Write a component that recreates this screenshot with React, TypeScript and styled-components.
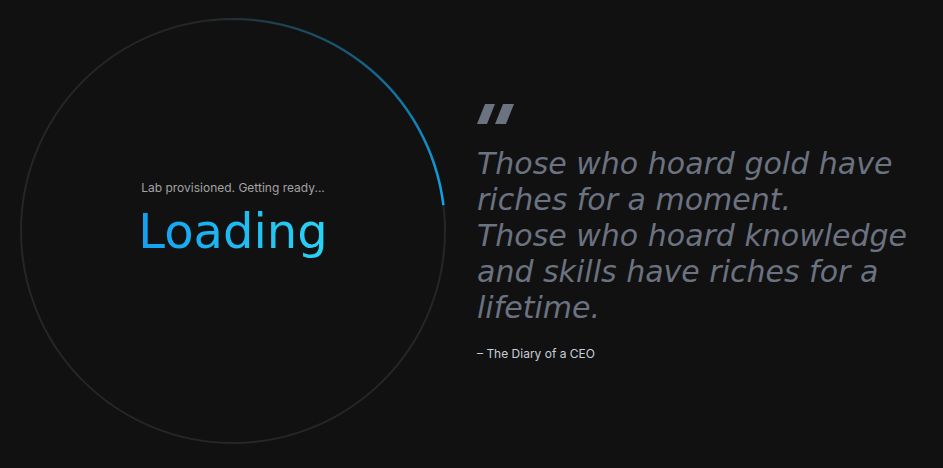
import React from "react";
import styled, { createGlobalStyle } from "styled-components";

const Global = createGlobalStyle`
  html, body { margin: 0; padding: 0; background: #111111; }
  body { font-family: Inter, "Liberation Sans", sans-serif; }
`;

const Page = styled.main`
  width: 943px;
  height: 468px;
  box-sizing: border-box;
  display: flex;
  align-items: center;
  padding: 0 0 6px 20px;
  gap: 31px;
  background: #111111;
  overflow: hidden;
`;

const Ring = styled.div`
  position: relative;
  width: 426px;
  height: 426px;
  flex: none;
  display: flex;
  flex-direction: column;
  align-items: center;
  justify-content: center;
`;

const RingSvg = styled.svg`
  position: absolute;
  inset: 0;
`;

const Center = styled.div`
  position: relative;
  display: flex;
  flex-direction: column;
  align-items: center;
  margin-top: -22px;
`;

const Status = styled.div`
  font-family: Inter, sans-serif;
  font-size: 12px;
  color: #a3a3a3;
  line-height: 16px;
`;

const Title = styled.h1`
  margin: 5px 0 0;
  font-family: "DejaVu Sans", sans-serif;
  font-weight: 400;
  font-size: 48px;
  line-height: 60px;
  background: linear-gradient(90deg, #139ff0, #2ad4f5);
  -webkit-background-clip: text;
  background-clip: text;
  color: transparent;
`;

const QuoteBlock = styled.section`
  display: flex;
  flex-direction: column;
  align-items: flex-start;
  padding-top: 4px;
`;

const Mark = styled.svg`
  display: block;
`;

const QuoteText = styled.p`
  margin: 22px 0 0;
  font-family: "DejaVu Sans", sans-serif;
  font-style: italic;
  font-weight: 400;
  font-size: 30px;
  line-height: 36px;
  color: #6b7280;
  width: 455px;
`;

const Author = styled.div`
  margin-top: 20px;
  font-family: Inter, sans-serif;
  font-size: 12px;
  line-height: 16px;
  color: #c9ced6;
`;

export default function App() {
  const cx = 213, cy = 213, r = 212;
  const a0 = (-8 * Math.PI) / 180;
  const a1 = (83 * Math.PI) / 180;
  const p = (a: number) => [cx + r * Math.sin(a), cy - r * Math.cos(a)];
  const [x0, y0] = p(a0);
  const [x1, y1] = p(a1);
  return (
    <>
      <Global />
      <Page>
        <Ring>
          <RingSvg width="426" height="426" viewBox="0 0 426 426">
            <defs>
              <linearGradient id="arcg" x1={x0} y1={y0} x2={x1} y2={y1} gradientUnits="userSpaceOnUse">
                <stop offset="0" stopColor="#0ea5e9" stopOpacity="0" />
                <stop offset="0.55" stopColor="#0c8fcc" stopOpacity="0.6" />
                <stop offset="1" stopColor="#0ea5e9" stopOpacity="1" />
              </linearGradient>
            </defs>
            <circle cx={cx} cy={cy} r={r} fill="none" stroke="#262626" strokeWidth="2" />
            <path
              d={`M ${x0} ${y0} A ${r} ${r} 0 0 1 ${x1} ${y1}`}
              fill="none"
              stroke="url(#arcg)"
              strokeWidth="2.5"
            />
          </RingSvg>
          <Center>
            <Status>Lab provisioned. Getting ready...</Status>
            <Title>Loading</Title>
          </Center>
        </Ring>
        <QuoteBlock>
          <Mark width="40" height="20" viewBox="0 0 40 20">
            <polygon points="8,0 18,0 10,20 0,20" fill="#6b7280" />
            <polygon points="26,0 37,0 29,20 18,20" fill="#6b7280" />
          </Mark>
          <QuoteText>
            Those who hoard gold have riches for a moment.
            <br />
            Those who hoard knowledge and skills have riches for a lifetime.
          </QuoteText>
          <Author>– The Diary of a CEO</Author>
        </QuoteBlock>
      </Page>
    </>
  );
}
